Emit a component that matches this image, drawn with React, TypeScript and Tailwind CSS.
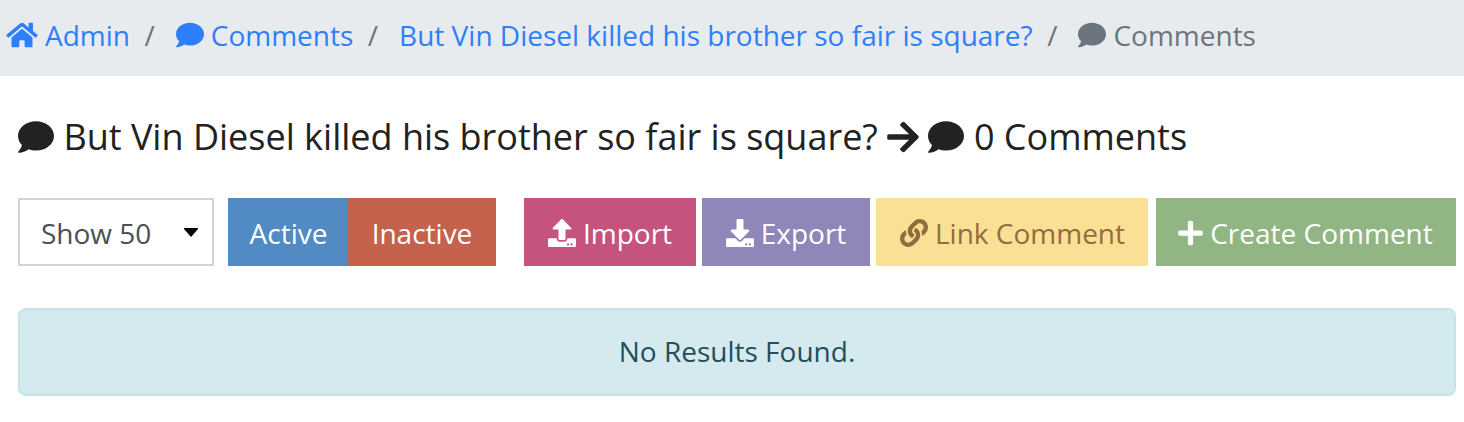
import { FaHome, FaComment, FaArrowRight, FaUpload, FaDownload, FaLink, FaPlus } from "react-icons/fa";

const title = "But Vin Diesel killed his brother so fair is square?";

export default function App() {
  return (
    <div className="h-[422px] overflow-hidden bg-white font-['Open_Sans',sans-serif] text-[28px] leading-[42px] whitespace-nowrap text-[#212529]">
      <nav className="flex h-[76px] items-start bg-[#e8ebee] pt-[14px] pl-[6px] text-[#2d7ffb]">
        <a className="flex items-center gap-[7px]"><FaHome className="h-[28px] w-[32px]" /><span>Admin</span></a>
        <span className="mr-[15px] ml-[14.5px] text-[#6c757d]">/</span>
        <a className="ml-[6px] flex items-center gap-[7px]"><FaComment className="size-[28px]" /><span>Comments</span></a>
        <span className="mr-[15px] ml-[14.5px] text-[#6c757d]">/</span>
        <a className="ml-[6px]">{title}</a>
        <span className="mr-[15px] ml-[14.5px] text-[#6c757d]">/</span>
        <span className="ml-[6px] flex items-center gap-[7px] text-[#6c757d]"><FaComment className="size-[28px]" /><span>Comments</span></span>
      </nav>
      <main className="pr-[8px] pl-[18px]">
        <h1 className="mt-[40px] flex h-[42px] items-center text-[36px] text-[#222222]">
          <FaComment className="mr-[9.4px] size-[36px]" />
          <span>{title}</span>
          <FaArrowRight className="mx-[9.2px] h-[36px] w-[32px]" />
          <FaComment className="mr-[9.6px] size-[36px]" />
          <span>0 Comments</span>
        </h1>
        <div className="mt-[40px] flex h-[68px] text-white">
          <button className="flex w-[196px] items-center justify-between border-2 border-[#ced4da] pr-[14px] pl-[21px] text-[#495057]">
            <span className="pt-[2px]">Show 50</span>
            <svg className="h-[9px] w-[14px] fill-black" viewBox="0 0 14 9"><path d="M0 0h14v1L7 9 0 1z" /></svg>
          </button>
          <button className="ml-[14px] w-[120px] bg-[#528ac4] pt-[2px] pl-px">Active</button>
          <button className="w-[148px] bg-[#c4624e] pt-[2px]">Inactive</button>
          <button className="ml-[28px] flex w-[172px] items-center justify-center gap-[7px] bg-[#c6537d] pt-[2px]"><FaUpload className="size-[28px]" /><span>Import</span></button>
          <button className="ml-[6px] flex w-[168px] items-center justify-center gap-[7px] bg-[#9186ba] pt-[2px]"><FaDownload className="size-[28px]" /><span>Export</span></button>
          <button className="ml-[6px] flex w-[272px] items-center justify-center gap-[7px] bg-[#fae094] pt-[2px] pl-px text-[#946b40]"><FaLink className="size-[28px]" /><span>Link Comment</span></button>
          <button className="ml-[8px] flex w-[300px] items-center justify-center gap-[7px] bg-[#92b584] pt-[2px] pr-px"><FaPlus className="h-[28px] w-[25px]" /><span>Create Comment</span></button>
        </div>
        <div className="mt-[42px] flex h-[88px] items-center justify-center rounded-[8px] border-2 border-[#c2e5ea] bg-[#d5eaef] pb-[2px] text-[#244e5c]">No Results Found.</div>
      </main>
    </div>
  );
}
